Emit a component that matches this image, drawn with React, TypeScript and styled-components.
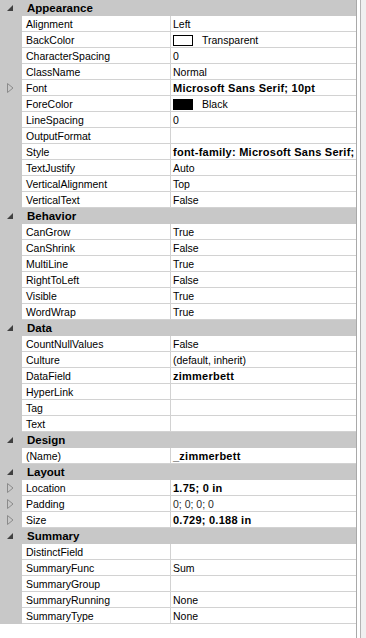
import React from "react";
import styled, { createGlobalStyle } from "styled-components";

const Global = createGlobalStyle`
  html, body { margin: 0; padding: 0; background: #ffffff; }
  body { font-family: "Liberation Sans", Arial, sans-serif; }
`;

const Page = styled.div`
  display: flex;
  width: 366px;
  height: 638px;
  overflow: hidden;
  background: #ffffff;
`;

const Grid = styled.div`
  width: 356px;
  display: flex;
  flex-direction: column;
`;

const Edge = styled.div`
  width: 10px;
  height: 638px;
  box-sizing: border-box;
  border-left: 1px solid #a9a9a9;
  display: flex;
`;

const EdgeInner = styled.div`
  margin-left: 3px;
  width: 6px;
  border-left: 1px solid #b4b4b4;
  background: #f0f0f0;
`;

const HeaderRow = styled.div`
  display: grid;
  grid-template-columns: 22px 1fr;
  height: 16px;
  background: #c8c8c8;
  align-items: center;
`;

const HeaderText = styled.div`
  font-weight: bold;
  font-size: 11.5px;
  color: #000;
  padding-left: 5px;
  padding-top: 1px;
  line-height: 15px;
`;

const Glyph = styled.div`
  display: flex;
  align-items: center;
  justify-content: center;
  height: 16px;
  padding-right: 2px;
`;

const PropRow = styled.div`
  display: grid;
  grid-template-columns: 22px 149px 1fr;
  height: 16px;
`;

const Margin = styled.div`
  background: #c8c8c8;
  display: flex;
  align-items: center;
  justify-content: center;
  padding-right: 2px;
`;

const NameCell = styled.div`
  box-sizing: border-box;
  background: #fff;
  border-bottom: 1px solid #d2d2d2;
  border-right: 1px solid #d2d2d2;
  font-size: 10.5px;
  line-height: 14px;
  padding-top: 1px;
  padding-left: 4px;
  color: #000;
  white-space: nowrap;
  overflow: hidden;
`;

const ValueCell = styled.div<{ $bold?: boolean; $dim?: boolean }>`
  box-sizing: border-box;
  background: #fff;
  border-bottom: 1px solid #d2d2d2;
  font-size: ${(p) => (p.$bold ? "11px" : "10.5px")};
  letter-spacing: ${(p) => (p.$bold ? "0.25px" : "0")};
  line-height: 14px;
  padding-top: 1px;
  padding-left: 2px;
  color: ${(p) => (p.$dim ? "#2a2a2a" : "#000")};
  font-weight: ${(p) => (p.$bold ? "bold" : "normal")};
  white-space: nowrap;
  overflow: hidden;
  display: flex;
  align-items: center;
`;

const Swatch = styled.span<{ $color: string }>`
  box-sizing: border-box;
  width: 20px;
  height: 11px;
  border: 1px solid #000;
  background: ${(p) => p.$color};
  margin-right: 9px;
  flex: none;
`;

const Bottom = styled.div`
  flex: 1;
  background: #fff;
`;

const Collapse = () => (
  <svg width="7" height="7" viewBox="0 0 7 7">
    <polygon points="6,0 6,6 0,6" fill="#404040" />
  </svg>
);

const Expand = () => (
  <svg width="7" height="10" viewBox="0 0 7 10">
    <polygon points="0.5,0.5 6,5 0.5,9.5" fill="none" stroke="#8a8a8a" strokeWidth="1" />
  </svg>
);

type Prop = {
  name: string;
  value?: string;
  bold?: boolean;
  dim?: boolean;
  expand?: boolean;
  swatch?: string;
};

type Category = { title: string; props: Prop[] };

const data: Category[] = [
  {
    title: "Appearance",
    props: [
      { name: "Alignment", value: "Left" },
      { name: "BackColor", value: "Transparent", swatch: "#ffffff" },
      { name: "CharacterSpacing", value: "0" },
      { name: "ClassName", value: "Normal" },
      { name: "Font", value: "Microsoft Sans Serif; 10pt", bold: true, expand: true },
      { name: "ForeColor", value: "Black", swatch: "#000000" },
      { name: "LineSpacing", value: "0" },
      { name: "OutputFormat", value: "" },
      { name: "Style", value: "font-family: Microsoft Sans Serif;", bold: true },
      { name: "TextJustify", value: "Auto" },
      { name: "VerticalAlignment", value: "Top" },
      { name: "VerticalText", value: "False" },
    ],
  },
  {
    title: "Behavior",
    props: [
      { name: "CanGrow", value: "True" },
      { name: "CanShrink", value: "False" },
      { name: "MultiLine", value: "True" },
      { name: "RightToLeft", value: "False" },
      { name: "Visible", value: "True" },
      { name: "WordWrap", value: "True" },
    ],
  },
  {
    title: "Data",
    props: [
      { name: "CountNullValues", value: "False" },
      { name: "Culture", value: "(default, inherit)" },
      { name: "DataField", value: "zimmerbett", bold: true },
      { name: "HyperLink", value: "" },
      { name: "Tag", value: "" },
      { name: "Text", value: "" },
    ],
  },
  {
    title: "Design",
    props: [{ name: "(Name)", value: "_zimmerbett", bold: true }],
  },
  {
    title: "Layout",
    props: [
      { name: "Location", value: "1.75; 0 in", bold: true, expand: true },
      { name: "Padding", value: "0; 0; 0; 0", dim: true, expand: true },
      { name: "Size", value: "0.729; 0.188 in", bold: true, expand: true },
    ],
  },
  {
    title: "Summary",
    props: [
      { name: "DistinctField", value: "" },
      { name: "SummaryFunc", value: "Sum" },
      { name: "SummaryGroup", value: "" },
      { name: "SummaryRunning", value: "None" },
      { name: "SummaryType", value: "None" },
    ],
  },
];

export default function App() {
  return (
    <>
      <Global />
      <Page>
        <Grid>
          {data.map((cat) => (
            <React.Fragment key={cat.title}>
              <HeaderRow>
                <Glyph>
                  <Collapse />
                </Glyph>
                <HeaderText>{cat.title}</HeaderText>
              </HeaderRow>
              {cat.props.map((p) => (
                <PropRow key={p.name}>
                  <Margin>{p.expand ? <Expand /> : null}</Margin>
                  <NameCell>{p.name}</NameCell>
                  <ValueCell $bold={p.bold} $dim={p.dim}>
                    {p.swatch ? <Swatch $color={p.swatch} /> : null}
                    {p.value}
                  </ValueCell>
                </PropRow>
              ))}
            </React.Fragment>
          ))}
          <Bottom />
        </Grid>
        <Edge>
          <EdgeInner />
        </Edge>
      </Page>
    </>
  );
}
